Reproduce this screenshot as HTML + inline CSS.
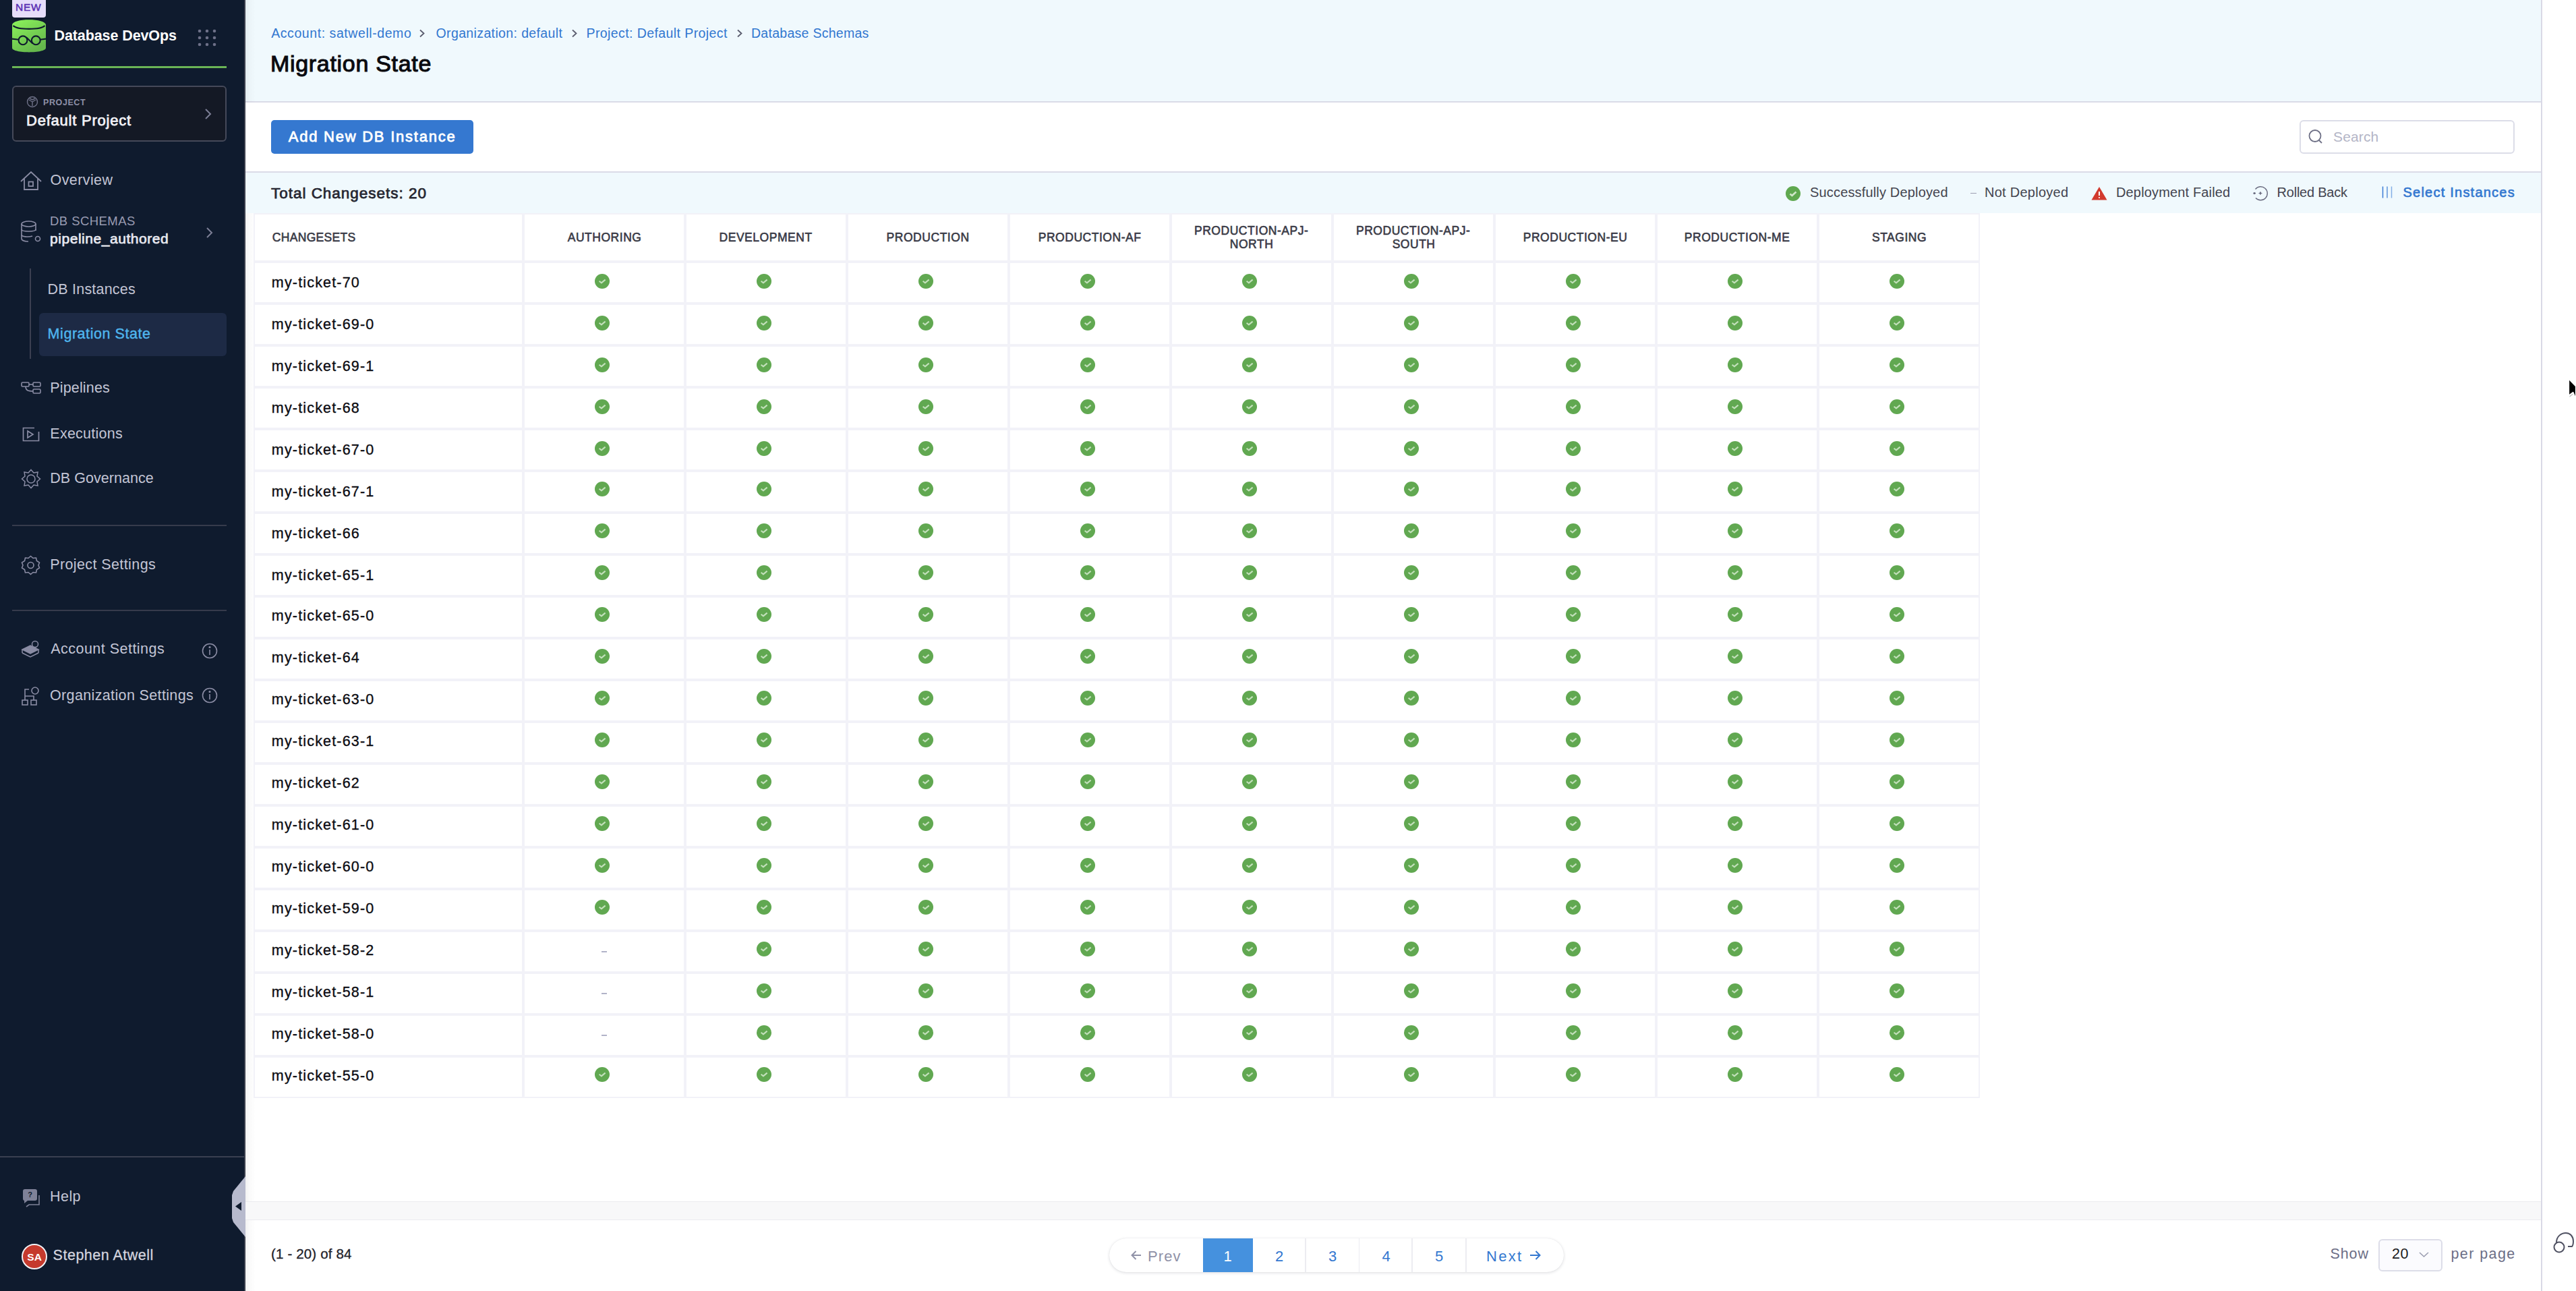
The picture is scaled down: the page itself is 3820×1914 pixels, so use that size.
<!DOCTYPE html>
<html><head><meta charset="utf-8"><title>Migration State</title>
<style>
html,body{margin:0;padding:0;width:3820px;height:1914px;overflow:hidden;background:#fff;font-family:"Liberation Sans",sans-serif;}
.a{position:absolute;}
.t{position:absolute;white-space:nowrap;line-height:1;font-family:"Liberation Sans",sans-serif;}
#side{position:absolute;left:0;top:0;width:362px;height:1914px;background:#0f1b2e;}
#sideedge{position:absolute;left:362px;top:0;width:2px;height:1914px;background:#3b3f4d;}
#hdr{position:absolute;left:364px;top:0;width:3404px;height:150px;background:#f0f9fd;border-bottom:2px solid #dadbe7;}
#tool{position:absolute;left:364px;top:152px;width:3404px;height:102px;background:#fff;border-bottom:2px solid #dadbe7;}
#legend{position:absolute;left:364px;top:256px;width:3404px;height:60px;background:#f0f9fd;}
#tbl{position:absolute;left:376px;top:316px;width:2560px;height:1312px;background:#f2f2f8;}
.c{position:absolute;background:#fff;}
#scroll{position:absolute;left:364px;top:1781px;width:3404px;height:26px;background:#f8f8f9;border-top:1.5px solid #ebebef;border-bottom:1.5px solid #ebebef;}
#rb{position:absolute;left:3768px;top:0;width:2px;height:1914px;background:#d9d9e6;}
.ck{position:absolute;width:22px;height:22px;}
.ds{position:absolute;width:8px;height:2px;background:#b1b3c8;}
</style></head><body>
<div id="side"></div>
<div id="sideedge"></div>
<!-- NEW badge -->
<div class="a" style="left:18px;top:0;width:50px;height:26px;background:#e6ddfa;border-radius:0 0 4px 4px;"></div>
<!-- logo -->
<svg class="a" style="left:18px;top:28px" width="50" height="50" viewBox="0 0 50 50">
 <defs><linearGradient id="lg" x1="0" y1="0" x2="0.6" y2="1"><stop offset="0" stop-color="#8cf35b"/><stop offset="1" stop-color="#65b74c"/></linearGradient></defs>
 <path d="M0 9 C0 -1.5 50 -1.5 50 9 L50 43 C50 51.5 0 51.5 0 43 Z" fill="url(#lg)"/>
 <path d="M1.5 10 C8 16.5 42 16.5 48.5 10" stroke="#0f1b2e" stroke-width="2.2" fill="none"/>
 <g stroke="#0f1b2e" stroke-width="2.1" fill="none"><circle cx="16" cy="31.8" r="6.4"/><circle cx="35.3" cy="31.8" r="6.4"/><path d="M0 29.6 L9.8 30.8 M21 27.2 L30.4 36.4 M41.6 30.8 L50 29.6"/></g>
</svg>
<!-- grid dots -->
<svg class="a" style="left:293px;top:43px" width="28" height="26" viewBox="0 0 28 26">
 <g fill="#6d7088"><circle cx="3" cy="3" r="2.3"/><circle cx="14" cy="3" r="2.3"/><circle cx="25" cy="3" r="2.3"/>
 <circle cx="3" cy="13" r="2.3"/><circle cx="14" cy="13" r="2.3"/><circle cx="25" cy="13" r="2.3"/>
 <circle cx="3" cy="23" r="2.3"/><circle cx="14" cy="23" r="2.3"/><circle cx="25" cy="23" r="2.3"/></g>
</svg>
<div class="a" style="left:18px;top:98px;width:318px;height:3px;background:#6ab556;"></div>
<!-- project box -->
<div class="a" style="left:18px;top:127px;width:314px;height:79px;background:#141925;border:2px solid #454959;border-radius:6px;"></div>
<svg class="a" style="left:39px;top:142px" width="18" height="18" viewBox="0 0 18 18"><g fill="none" stroke="#6f7289" stroke-width="1.4"><circle cx="9" cy="9" r="7.5"/><path d="M4 6 L9 9 L14 6 M9 9 L9 15 M5 4 L9 6 L13 4"/></g></svg>
<svg class="a" style="left:302px;top:160px" width="14" height="18" viewBox="0 0 14 18"><path d="M3 2 L10 9 L3 16" fill="none" stroke="#7c7f96" stroke-width="2"/></svg>
<!-- overview icon -->
<svg class="a" style="left:29px;top:253px" width="33" height="30" viewBox="0 0 33 30"><g fill="none" stroke="#8a8ca4" stroke-width="1.8"><path d="M2 16 L17 2 L32 16"/><path d="M7 12 L7 28 L27 28 L27 12"/><rect x="13.5" y="16.5" width="6.5" height="6.5"/></g></svg>
<!-- db schema icon -->
<svg class="a" style="left:30px;top:326px" width="34" height="34" viewBox="0 0 34 34"><g fill="none" stroke="#8a8ca4" stroke-width="1.6"><ellipse cx="12.5" cy="6" rx="10.5" ry="4"/><path d="M2 6 V28 C2 31 8 32 12 32"/><path d="M23 6 V16"/><path d="M2 14 C2 18 23 18 23 14"/><path d="M2 22 C2 25 12 26 18 24"/><circle cx="26" cy="28" r="3.5"/></g></svg>
<svg class="a" style="left:304px;top:336px" width="14" height="18" viewBox="0 0 14 18"><path d="M3 2 L10 9 L3 16" fill="none" stroke="#7c7f96" stroke-width="2"/></svg>
<div class="a" style="left:44px;top:398px;width:2px;height:134px;background:#3b4051;"></div>
<div class="a" style="left:58px;top:464px;width:278px;height:64px;background:#1d2a45;border-radius:6px;"></div>
<!-- pipelines icon -->
<svg class="a" style="left:30px;top:565px" width="32" height="20" viewBox="0 0 32 20"><g fill="none" stroke="#8a8ca4" stroke-width="1.6"><rect x="2" y="2" width="11" height="6" rx="1.5"/><rect x="19" y="2" width="11" height="6" rx="1.5"/><rect x="19" y="12" width="11" height="6" rx="1.5"/><path d="M13 5 H19"/><path d="M8 8 C8 14 12 15 19 15"/></g></svg>
<!-- executions icon -->
<svg class="a" style="left:33px;top:633px" width="27" height="22" viewBox="0 0 27 22"><g fill="none" stroke="#8a8ca4" stroke-width="1.7"><path d="M18 1.5 H1.5 V20.5 H24.5 V7"/><path d="M8 6 L16 11 L8 16 Z"/></g></svg>
<!-- governance icon -->
<svg class="a" style="left:31px;top:695px" width="30" height="30" viewBox="0 0 30 30"><g fill="none" stroke="#8a8ca4" stroke-width="1.5"><path d="M15 1.5 L19 6 L25 5 L24 11 L28.5 15 L24 19 L25 25 L19 24 L15 28.5 L11 24 L5 25 L6 19 L1.5 15 L6 11 L5 5 L11 6 Z"/><circle cx="15" cy="15" r="6"/></g></svg>
<div class="a" style="left:18px;top:778px;width:318px;height:1.5px;background:#363b4c;"></div>
<!-- project settings gear -->
<svg class="a" style="left:31px;top:823px" width="29" height="30" viewBox="0 0 29 30"><g fill="none" stroke="#8a8ca4" stroke-width="1.6"><path d="M14.5 1.5 L18 4.5 L22.5 4 L23.5 8.5 L27.5 11 L26 15 L27.5 19 L23.5 21.5 L22.5 26 L18 25.5 L14.5 28.5 L11 25.5 L6.5 26 L5.5 21.5 L1.5 19 L3 15 L1.5 11 L5.5 8.5 L6.5 4 L11 4.5 Z"/><circle cx="14.5" cy="15" r="4.5"/></g></svg>
<div class="a" style="left:18px;top:904px;width:318px;height:1.5px;background:#363b4c;"></div>
<!-- account settings icon -->
<svg class="a" style="left:31px;top:949px" width="29" height="30" viewBox="0 0 29 30"><g fill="none" stroke="#8a8ca4" stroke-width="1.5"><path d="M2 14 L14 8 L26 14 L14 20 Z" fill="#8a8ca4"/><path d="M2 19 L14 25 L26 19"/><path d="M2 14 V19 M26 14 V19"/><circle cx="21" cy="6" r="4.5" fill="#0f1b2e"/></g></svg>
<svg class="a" style="left:299px;top:953px" width="24" height="24" viewBox="0 0 24 24"><g fill="none" stroke="#8a8ca4" stroke-width="1.6"><circle cx="12" cy="12" r="10.5"/><path d="M12 10 V18"/><circle cx="12" cy="6.5" r="0.8" fill="#8a8ca4"/></g></svg>
<!-- org settings icon -->
<svg class="a" style="left:31px;top:1017px" width="29" height="30" viewBox="0 0 29 30"><g fill="none" stroke="#8a8ca4" stroke-width="1.6"><rect x="2" y="21" width="8" height="7"/><rect x="15" y="21" width="8" height="7"/><path d="M6 21 V15 H19 V21 M6 15 V5 H12"/><circle cx="21" cy="7" r="5"/></g></svg>
<svg class="a" style="left:299px;top:1019px" width="24" height="24" viewBox="0 0 24 24"><g fill="none" stroke="#8a8ca4" stroke-width="1.6"><circle cx="12" cy="12" r="10.5"/><path d="M12 10 V18"/><circle cx="12" cy="6.5" r="0.8" fill="#8a8ca4"/></g></svg>
<div class="a" style="left:0;top:1714px;width:362px;height:1.5px;background:#3a3f50;"></div>
<!-- help icon -->
<svg class="a" style="left:32px;top:1762px" width="32" height="30" viewBox="0 0 32 30"><path d="M2 4 C2 2 3 1 5 1 H20 C22 1 23 2 23 4 V15 C23 17 22 18 20 18 H9 L4 22 V18 C3 18 2 17 2 15 Z" fill="#7f8298"/><path d="M26 10 V24 H11 L7 27" fill="none" stroke="#7f8298" stroke-width="1.6"/><text x="12.5" y="13" font-size="11" font-weight="700" fill="#0f1b2e" text-anchor="middle" font-family="Liberation Sans">?</text></svg>
<!-- collapse tab -->
<svg class="a" style="left:343px;top:1744px" width="21" height="90" viewBox="0 0 21 90"><path d="M21 0 L3 22 L1 28 V62 L3 68 L21 90 Z" fill="#b7bacd"/><path d="M15 38 L6 44.5 L15 51 Z" fill="#0f1b2e"/></svg>
<!-- avatar -->
<div class="a" style="left:32px;top:1844px;width:34px;height:34px;border-radius:50%;background:#c53a2d;border:2px solid #f2f2f5;"></div>

<!-- main -->
<div id="hdr"></div>
<div class="a" style="left:364px;top:0;width:15px;height:1914px;background:linear-gradient(90deg,rgba(0,0,0,0.055),rgba(0,0,0,0.02) 40%,rgba(0,0,0,0));"></div>
<!-- breadcrumb chevrons -->
<svg class="a" style="left:619px;top:42px" width="14" height="15" viewBox="0 0 14 15"><path d="M4 2.5 L9.5 7.5 L4 12.5" fill="none" stroke="#5a5c6e" stroke-width="1.8"/></svg>
<svg class="a" style="left:845px;top:42px" width="14" height="15" viewBox="0 0 14 15"><path d="M4 2.5 L9.5 7.5 L4 12.5" fill="none" stroke="#5a5c6e" stroke-width="1.8"/></svg>
<svg class="a" style="left:1090px;top:42px" width="14" height="15" viewBox="0 0 14 15"><path d="M4 2.5 L9.5 7.5 L4 12.5" fill="none" stroke="#5a5c6e" stroke-width="1.8"/></svg>
<div id="tool"></div>
<div class="a" style="left:402px;top:178px;width:300px;height:50px;background:#3578d0;border-radius:5px;"></div>
<div class="a" style="left:3410px;top:178px;width:315px;height:46px;background:#fff;border:2px solid #dcdde8;border-radius:6px;"></div>
<svg class="a" style="left:3422px;top:190px" width="26" height="26" viewBox="0 0 26 26"><g fill="none" stroke="#6e7086" stroke-width="1.8"><circle cx="11" cy="11.5" r="8.5"/><path d="M17 18 L21 22"/></g></svg>
<div id="legend"></div>
<svg class="ck" style="left:2648px;top:276px" viewBox="0 0 22 22"><circle cx="11" cy="11" r="11" fill="#5fa84f"/><path d="M6.5 11.5 L9.5 14 L15.5 8.5" fill="none" stroke="#cfe6c8" stroke-width="2.6"/></svg>
<div class="a" style="left:2922px;top:285.5px;width:8.5px;height:1.5px;background:#9c9eb2;"></div>
<svg class="a" style="left:3101px;top:276px" width="24" height="21" viewBox="0 0 24 21"><path d="M12 1 L23.5 20.5 H0.5 Z" fill="#d23a2e"/><path d="M12 8 V14" stroke="#fff" stroke-width="2"/><circle cx="12" cy="17" r="1.1" fill="#fff"/></svg>
<svg class="a" style="left:3339px;top:274px" width="26" height="25" viewBox="0 0 26 25"><g fill="none" stroke="#6a6c80" stroke-width="1.4"><path d="M5.5 6.5 A10 10 0 1 1 6 19.5" /><path d="M3 12.5 H6"/></g><circle cx="4" cy="12.5" r="1.6" fill="#6a6c80"/><circle cx="13" cy="12.5" r="1.4" fill="#6a6c80"/><path d="M13 10 V15 M10.5 12.5 H15.5" stroke="#6a6c80" stroke-width="1"/></svg>
<svg class="a" style="left:3531px;top:275px" width="18" height="20" viewBox="0 0 18 20"><g stroke="#3a7bd5" stroke-width="1.5"><path d="M2.5 1.5 V18.5"/><path d="M9 1.5 V18.5" stroke-opacity="0.8"/><path d="M15.5 1.5 V18.5" stroke-opacity="0.6"/></g></svg>
<div id="tbl">
<svg width="0" height="0" style="position:absolute"><defs><g id="chk"><circle cx="11" cy="11" r="11" fill="#61a851"/><path d="M6.6 10.8 L9.9 13.4 L15.6 8.6" fill="none" stroke="#c3e0bb" stroke-width="2.1"/></g></defs></svg><div class="c" style="left:2px;top:2px;width:396px;height:68px"></div>
<div class="c" style="left:402px;top:2px;width:236px;height:68px"></div>
<div class="c" style="left:642px;top:2px;width:236px;height:68px"></div>
<div class="c" style="left:882px;top:2px;width:236px;height:68px"></div>
<div class="c" style="left:1122px;top:2px;width:236px;height:68px"></div>
<div class="c" style="left:1362px;top:2px;width:236px;height:68px"></div>
<div class="c" style="left:1602px;top:2px;width:236px;height:68px"></div>
<div class="c" style="left:1842px;top:2px;width:236px;height:68px"></div>
<div class="c" style="left:2082px;top:2px;width:236px;height:68px"></div>
<div class="c" style="left:2322px;top:2px;width:236px;height:68px"></div>
<div class="c" style="left:2px;top:74px;width:396px;height:58px"></div>
<div class="c" style="left:402px;top:74px;width:236px;height:58px"></div>
<div class="c" style="left:642px;top:74px;width:236px;height:58px"></div>
<div class="c" style="left:882px;top:74px;width:236px;height:58px"></div>
<div class="c" style="left:1122px;top:74px;width:236px;height:58px"></div>
<div class="c" style="left:1362px;top:74px;width:236px;height:58px"></div>
<div class="c" style="left:1602px;top:74px;width:236px;height:58px"></div>
<div class="c" style="left:1842px;top:74px;width:236px;height:58px"></div>
<div class="c" style="left:2082px;top:74px;width:236px;height:58px"></div>
<div class="c" style="left:2322px;top:74px;width:236px;height:58px"></div>
<div class="c" style="left:2px;top:136px;width:396px;height:58px"></div>
<div class="c" style="left:402px;top:136px;width:236px;height:58px"></div>
<div class="c" style="left:642px;top:136px;width:236px;height:58px"></div>
<div class="c" style="left:882px;top:136px;width:236px;height:58px"></div>
<div class="c" style="left:1122px;top:136px;width:236px;height:58px"></div>
<div class="c" style="left:1362px;top:136px;width:236px;height:58px"></div>
<div class="c" style="left:1602px;top:136px;width:236px;height:58px"></div>
<div class="c" style="left:1842px;top:136px;width:236px;height:58px"></div>
<div class="c" style="left:2082px;top:136px;width:236px;height:58px"></div>
<div class="c" style="left:2322px;top:136px;width:236px;height:58px"></div>
<div class="c" style="left:2px;top:198px;width:396px;height:58px"></div>
<div class="c" style="left:402px;top:198px;width:236px;height:58px"></div>
<div class="c" style="left:642px;top:198px;width:236px;height:58px"></div>
<div class="c" style="left:882px;top:198px;width:236px;height:58px"></div>
<div class="c" style="left:1122px;top:198px;width:236px;height:58px"></div>
<div class="c" style="left:1362px;top:198px;width:236px;height:58px"></div>
<div class="c" style="left:1602px;top:198px;width:236px;height:58px"></div>
<div class="c" style="left:1842px;top:198px;width:236px;height:58px"></div>
<div class="c" style="left:2082px;top:198px;width:236px;height:58px"></div>
<div class="c" style="left:2322px;top:198px;width:236px;height:58px"></div>
<div class="c" style="left:2px;top:260px;width:396px;height:58px"></div>
<div class="c" style="left:402px;top:260px;width:236px;height:58px"></div>
<div class="c" style="left:642px;top:260px;width:236px;height:58px"></div>
<div class="c" style="left:882px;top:260px;width:236px;height:58px"></div>
<div class="c" style="left:1122px;top:260px;width:236px;height:58px"></div>
<div class="c" style="left:1362px;top:260px;width:236px;height:58px"></div>
<div class="c" style="left:1602px;top:260px;width:236px;height:58px"></div>
<div class="c" style="left:1842px;top:260px;width:236px;height:58px"></div>
<div class="c" style="left:2082px;top:260px;width:236px;height:58px"></div>
<div class="c" style="left:2322px;top:260px;width:236px;height:58px"></div>
<div class="c" style="left:2px;top:322px;width:396px;height:58px"></div>
<div class="c" style="left:402px;top:322px;width:236px;height:58px"></div>
<div class="c" style="left:642px;top:322px;width:236px;height:58px"></div>
<div class="c" style="left:882px;top:322px;width:236px;height:58px"></div>
<div class="c" style="left:1122px;top:322px;width:236px;height:58px"></div>
<div class="c" style="left:1362px;top:322px;width:236px;height:58px"></div>
<div class="c" style="left:1602px;top:322px;width:236px;height:58px"></div>
<div class="c" style="left:1842px;top:322px;width:236px;height:58px"></div>
<div class="c" style="left:2082px;top:322px;width:236px;height:58px"></div>
<div class="c" style="left:2322px;top:322px;width:236px;height:58px"></div>
<div class="c" style="left:2px;top:384px;width:396px;height:58px"></div>
<div class="c" style="left:402px;top:384px;width:236px;height:58px"></div>
<div class="c" style="left:642px;top:384px;width:236px;height:58px"></div>
<div class="c" style="left:882px;top:384px;width:236px;height:58px"></div>
<div class="c" style="left:1122px;top:384px;width:236px;height:58px"></div>
<div class="c" style="left:1362px;top:384px;width:236px;height:58px"></div>
<div class="c" style="left:1602px;top:384px;width:236px;height:58px"></div>
<div class="c" style="left:1842px;top:384px;width:236px;height:58px"></div>
<div class="c" style="left:2082px;top:384px;width:236px;height:58px"></div>
<div class="c" style="left:2322px;top:384px;width:236px;height:58px"></div>
<div class="c" style="left:2px;top:446px;width:396px;height:58px"></div>
<div class="c" style="left:402px;top:446px;width:236px;height:58px"></div>
<div class="c" style="left:642px;top:446px;width:236px;height:58px"></div>
<div class="c" style="left:882px;top:446px;width:236px;height:58px"></div>
<div class="c" style="left:1122px;top:446px;width:236px;height:58px"></div>
<div class="c" style="left:1362px;top:446px;width:236px;height:58px"></div>
<div class="c" style="left:1602px;top:446px;width:236px;height:58px"></div>
<div class="c" style="left:1842px;top:446px;width:236px;height:58px"></div>
<div class="c" style="left:2082px;top:446px;width:236px;height:58px"></div>
<div class="c" style="left:2322px;top:446px;width:236px;height:58px"></div>
<div class="c" style="left:2px;top:508px;width:396px;height:58px"></div>
<div class="c" style="left:402px;top:508px;width:236px;height:58px"></div>
<div class="c" style="left:642px;top:508px;width:236px;height:58px"></div>
<div class="c" style="left:882px;top:508px;width:236px;height:58px"></div>
<div class="c" style="left:1122px;top:508px;width:236px;height:58px"></div>
<div class="c" style="left:1362px;top:508px;width:236px;height:58px"></div>
<div class="c" style="left:1602px;top:508px;width:236px;height:58px"></div>
<div class="c" style="left:1842px;top:508px;width:236px;height:58px"></div>
<div class="c" style="left:2082px;top:508px;width:236px;height:58px"></div>
<div class="c" style="left:2322px;top:508px;width:236px;height:58px"></div>
<div class="c" style="left:2px;top:570px;width:396px;height:58px"></div>
<div class="c" style="left:402px;top:570px;width:236px;height:58px"></div>
<div class="c" style="left:642px;top:570px;width:236px;height:58px"></div>
<div class="c" style="left:882px;top:570px;width:236px;height:58px"></div>
<div class="c" style="left:1122px;top:570px;width:236px;height:58px"></div>
<div class="c" style="left:1362px;top:570px;width:236px;height:58px"></div>
<div class="c" style="left:1602px;top:570px;width:236px;height:58px"></div>
<div class="c" style="left:1842px;top:570px;width:236px;height:58px"></div>
<div class="c" style="left:2082px;top:570px;width:236px;height:58px"></div>
<div class="c" style="left:2322px;top:570px;width:236px;height:58px"></div>
<div class="c" style="left:2px;top:632px;width:396px;height:58px"></div>
<div class="c" style="left:402px;top:632px;width:236px;height:58px"></div>
<div class="c" style="left:642px;top:632px;width:236px;height:58px"></div>
<div class="c" style="left:882px;top:632px;width:236px;height:58px"></div>
<div class="c" style="left:1122px;top:632px;width:236px;height:58px"></div>
<div class="c" style="left:1362px;top:632px;width:236px;height:58px"></div>
<div class="c" style="left:1602px;top:632px;width:236px;height:58px"></div>
<div class="c" style="left:1842px;top:632px;width:236px;height:58px"></div>
<div class="c" style="left:2082px;top:632px;width:236px;height:58px"></div>
<div class="c" style="left:2322px;top:632px;width:236px;height:58px"></div>
<div class="c" style="left:2px;top:694px;width:396px;height:58px"></div>
<div class="c" style="left:402px;top:694px;width:236px;height:58px"></div>
<div class="c" style="left:642px;top:694px;width:236px;height:58px"></div>
<div class="c" style="left:882px;top:694px;width:236px;height:58px"></div>
<div class="c" style="left:1122px;top:694px;width:236px;height:58px"></div>
<div class="c" style="left:1362px;top:694px;width:236px;height:58px"></div>
<div class="c" style="left:1602px;top:694px;width:236px;height:58px"></div>
<div class="c" style="left:1842px;top:694px;width:236px;height:58px"></div>
<div class="c" style="left:2082px;top:694px;width:236px;height:58px"></div>
<div class="c" style="left:2322px;top:694px;width:236px;height:58px"></div>
<div class="c" style="left:2px;top:756px;width:396px;height:58px"></div>
<div class="c" style="left:402px;top:756px;width:236px;height:58px"></div>
<div class="c" style="left:642px;top:756px;width:236px;height:58px"></div>
<div class="c" style="left:882px;top:756px;width:236px;height:58px"></div>
<div class="c" style="left:1122px;top:756px;width:236px;height:58px"></div>
<div class="c" style="left:1362px;top:756px;width:236px;height:58px"></div>
<div class="c" style="left:1602px;top:756px;width:236px;height:58px"></div>
<div class="c" style="left:1842px;top:756px;width:236px;height:58px"></div>
<div class="c" style="left:2082px;top:756px;width:236px;height:58px"></div>
<div class="c" style="left:2322px;top:756px;width:236px;height:58px"></div>
<div class="c" style="left:2px;top:818px;width:396px;height:58px"></div>
<div class="c" style="left:402px;top:818px;width:236px;height:58px"></div>
<div class="c" style="left:642px;top:818px;width:236px;height:58px"></div>
<div class="c" style="left:882px;top:818px;width:236px;height:58px"></div>
<div class="c" style="left:1122px;top:818px;width:236px;height:58px"></div>
<div class="c" style="left:1362px;top:818px;width:236px;height:58px"></div>
<div class="c" style="left:1602px;top:818px;width:236px;height:58px"></div>
<div class="c" style="left:1842px;top:818px;width:236px;height:58px"></div>
<div class="c" style="left:2082px;top:818px;width:236px;height:58px"></div>
<div class="c" style="left:2322px;top:818px;width:236px;height:58px"></div>
<div class="c" style="left:2px;top:880px;width:396px;height:58px"></div>
<div class="c" style="left:402px;top:880px;width:236px;height:58px"></div>
<div class="c" style="left:642px;top:880px;width:236px;height:58px"></div>
<div class="c" style="left:882px;top:880px;width:236px;height:58px"></div>
<div class="c" style="left:1122px;top:880px;width:236px;height:58px"></div>
<div class="c" style="left:1362px;top:880px;width:236px;height:58px"></div>
<div class="c" style="left:1602px;top:880px;width:236px;height:58px"></div>
<div class="c" style="left:1842px;top:880px;width:236px;height:58px"></div>
<div class="c" style="left:2082px;top:880px;width:236px;height:58px"></div>
<div class="c" style="left:2322px;top:880px;width:236px;height:58px"></div>
<div class="c" style="left:2px;top:942px;width:396px;height:58px"></div>
<div class="c" style="left:402px;top:942px;width:236px;height:58px"></div>
<div class="c" style="left:642px;top:942px;width:236px;height:58px"></div>
<div class="c" style="left:882px;top:942px;width:236px;height:58px"></div>
<div class="c" style="left:1122px;top:942px;width:236px;height:58px"></div>
<div class="c" style="left:1362px;top:942px;width:236px;height:58px"></div>
<div class="c" style="left:1602px;top:942px;width:236px;height:58px"></div>
<div class="c" style="left:1842px;top:942px;width:236px;height:58px"></div>
<div class="c" style="left:2082px;top:942px;width:236px;height:58px"></div>
<div class="c" style="left:2322px;top:942px;width:236px;height:58px"></div>
<div class="c" style="left:2px;top:1004px;width:396px;height:58px"></div>
<div class="c" style="left:402px;top:1004px;width:236px;height:58px"></div>
<div class="c" style="left:642px;top:1004px;width:236px;height:58px"></div>
<div class="c" style="left:882px;top:1004px;width:236px;height:58px"></div>
<div class="c" style="left:1122px;top:1004px;width:236px;height:58px"></div>
<div class="c" style="left:1362px;top:1004px;width:236px;height:58px"></div>
<div class="c" style="left:1602px;top:1004px;width:236px;height:58px"></div>
<div class="c" style="left:1842px;top:1004px;width:236px;height:58px"></div>
<div class="c" style="left:2082px;top:1004px;width:236px;height:58px"></div>
<div class="c" style="left:2322px;top:1004px;width:236px;height:58px"></div>
<div class="c" style="left:2px;top:1066px;width:396px;height:58px"></div>
<div class="c" style="left:402px;top:1066px;width:236px;height:58px"></div>
<div class="c" style="left:642px;top:1066px;width:236px;height:58px"></div>
<div class="c" style="left:882px;top:1066px;width:236px;height:58px"></div>
<div class="c" style="left:1122px;top:1066px;width:236px;height:58px"></div>
<div class="c" style="left:1362px;top:1066px;width:236px;height:58px"></div>
<div class="c" style="left:1602px;top:1066px;width:236px;height:58px"></div>
<div class="c" style="left:1842px;top:1066px;width:236px;height:58px"></div>
<div class="c" style="left:2082px;top:1066px;width:236px;height:58px"></div>
<div class="c" style="left:2322px;top:1066px;width:236px;height:58px"></div>
<div class="c" style="left:2px;top:1128px;width:396px;height:58px"></div>
<div class="c" style="left:402px;top:1128px;width:236px;height:58px"></div>
<div class="c" style="left:642px;top:1128px;width:236px;height:58px"></div>
<div class="c" style="left:882px;top:1128px;width:236px;height:58px"></div>
<div class="c" style="left:1122px;top:1128px;width:236px;height:58px"></div>
<div class="c" style="left:1362px;top:1128px;width:236px;height:58px"></div>
<div class="c" style="left:1602px;top:1128px;width:236px;height:58px"></div>
<div class="c" style="left:1842px;top:1128px;width:236px;height:58px"></div>
<div class="c" style="left:2082px;top:1128px;width:236px;height:58px"></div>
<div class="c" style="left:2322px;top:1128px;width:236px;height:58px"></div>
<div class="c" style="left:2px;top:1190px;width:396px;height:58px"></div>
<div class="c" style="left:402px;top:1190px;width:236px;height:58px"></div>
<div class="c" style="left:642px;top:1190px;width:236px;height:58px"></div>
<div class="c" style="left:882px;top:1190px;width:236px;height:58px"></div>
<div class="c" style="left:1122px;top:1190px;width:236px;height:58px"></div>
<div class="c" style="left:1362px;top:1190px;width:236px;height:58px"></div>
<div class="c" style="left:1602px;top:1190px;width:236px;height:58px"></div>
<div class="c" style="left:1842px;top:1190px;width:236px;height:58px"></div>
<div class="c" style="left:2082px;top:1190px;width:236px;height:58px"></div>
<div class="c" style="left:2322px;top:1190px;width:236px;height:58px"></div>
<div class="c" style="left:2px;top:1252px;width:396px;height:58px"></div>
<div class="c" style="left:402px;top:1252px;width:236px;height:58px"></div>
<div class="c" style="left:642px;top:1252px;width:236px;height:58px"></div>
<div class="c" style="left:882px;top:1252px;width:236px;height:58px"></div>
<div class="c" style="left:1122px;top:1252px;width:236px;height:58px"></div>
<div class="c" style="left:1362px;top:1252px;width:236px;height:58px"></div>
<div class="c" style="left:1602px;top:1252px;width:236px;height:58px"></div>
<div class="c" style="left:1842px;top:1252px;width:236px;height:58px"></div>
<div class="c" style="left:2082px;top:1252px;width:236px;height:58px"></div>
<div class="c" style="left:2322px;top:1252px;width:236px;height:58px"></div><svg class="ck" style="left:506px;top:89.80000000000001px" viewBox="0 0 22 22"><use href="#chk"/></svg>
<svg class="ck" style="left:746px;top:89.80000000000001px" viewBox="0 0 22 22"><use href="#chk"/></svg>
<svg class="ck" style="left:986px;top:89.80000000000001px" viewBox="0 0 22 22"><use href="#chk"/></svg>
<svg class="ck" style="left:1226px;top:89.80000000000001px" viewBox="0 0 22 22"><use href="#chk"/></svg>
<svg class="ck" style="left:1466px;top:89.80000000000001px" viewBox="0 0 22 22"><use href="#chk"/></svg>
<svg class="ck" style="left:1706px;top:89.80000000000001px" viewBox="0 0 22 22"><use href="#chk"/></svg>
<svg class="ck" style="left:1946px;top:89.80000000000001px" viewBox="0 0 22 22"><use href="#chk"/></svg>
<svg class="ck" style="left:2186px;top:89.80000000000001px" viewBox="0 0 22 22"><use href="#chk"/></svg>
<svg class="ck" style="left:2426px;top:89.80000000000001px" viewBox="0 0 22 22"><use href="#chk"/></svg>
<svg class="ck" style="left:506px;top:151.8px" viewBox="0 0 22 22"><use href="#chk"/></svg>
<svg class="ck" style="left:746px;top:151.8px" viewBox="0 0 22 22"><use href="#chk"/></svg>
<svg class="ck" style="left:986px;top:151.8px" viewBox="0 0 22 22"><use href="#chk"/></svg>
<svg class="ck" style="left:1226px;top:151.8px" viewBox="0 0 22 22"><use href="#chk"/></svg>
<svg class="ck" style="left:1466px;top:151.8px" viewBox="0 0 22 22"><use href="#chk"/></svg>
<svg class="ck" style="left:1706px;top:151.8px" viewBox="0 0 22 22"><use href="#chk"/></svg>
<svg class="ck" style="left:1946px;top:151.8px" viewBox="0 0 22 22"><use href="#chk"/></svg>
<svg class="ck" style="left:2186px;top:151.8px" viewBox="0 0 22 22"><use href="#chk"/></svg>
<svg class="ck" style="left:2426px;top:151.8px" viewBox="0 0 22 22"><use href="#chk"/></svg>
<svg class="ck" style="left:506px;top:213.79999999999995px" viewBox="0 0 22 22"><use href="#chk"/></svg>
<svg class="ck" style="left:746px;top:213.79999999999995px" viewBox="0 0 22 22"><use href="#chk"/></svg>
<svg class="ck" style="left:986px;top:213.79999999999995px" viewBox="0 0 22 22"><use href="#chk"/></svg>
<svg class="ck" style="left:1226px;top:213.79999999999995px" viewBox="0 0 22 22"><use href="#chk"/></svg>
<svg class="ck" style="left:1466px;top:213.79999999999995px" viewBox="0 0 22 22"><use href="#chk"/></svg>
<svg class="ck" style="left:1706px;top:213.79999999999995px" viewBox="0 0 22 22"><use href="#chk"/></svg>
<svg class="ck" style="left:1946px;top:213.79999999999995px" viewBox="0 0 22 22"><use href="#chk"/></svg>
<svg class="ck" style="left:2186px;top:213.79999999999995px" viewBox="0 0 22 22"><use href="#chk"/></svg>
<svg class="ck" style="left:2426px;top:213.79999999999995px" viewBox="0 0 22 22"><use href="#chk"/></svg>
<svg class="ck" style="left:506px;top:275.79999999999995px" viewBox="0 0 22 22"><use href="#chk"/></svg>
<svg class="ck" style="left:746px;top:275.79999999999995px" viewBox="0 0 22 22"><use href="#chk"/></svg>
<svg class="ck" style="left:986px;top:275.79999999999995px" viewBox="0 0 22 22"><use href="#chk"/></svg>
<svg class="ck" style="left:1226px;top:275.79999999999995px" viewBox="0 0 22 22"><use href="#chk"/></svg>
<svg class="ck" style="left:1466px;top:275.79999999999995px" viewBox="0 0 22 22"><use href="#chk"/></svg>
<svg class="ck" style="left:1706px;top:275.79999999999995px" viewBox="0 0 22 22"><use href="#chk"/></svg>
<svg class="ck" style="left:1946px;top:275.79999999999995px" viewBox="0 0 22 22"><use href="#chk"/></svg>
<svg class="ck" style="left:2186px;top:275.79999999999995px" viewBox="0 0 22 22"><use href="#chk"/></svg>
<svg class="ck" style="left:2426px;top:275.79999999999995px" viewBox="0 0 22 22"><use href="#chk"/></svg>
<svg class="ck" style="left:506px;top:337.79999999999995px" viewBox="0 0 22 22"><use href="#chk"/></svg>
<svg class="ck" style="left:746px;top:337.79999999999995px" viewBox="0 0 22 22"><use href="#chk"/></svg>
<svg class="ck" style="left:986px;top:337.79999999999995px" viewBox="0 0 22 22"><use href="#chk"/></svg>
<svg class="ck" style="left:1226px;top:337.79999999999995px" viewBox="0 0 22 22"><use href="#chk"/></svg>
<svg class="ck" style="left:1466px;top:337.79999999999995px" viewBox="0 0 22 22"><use href="#chk"/></svg>
<svg class="ck" style="left:1706px;top:337.79999999999995px" viewBox="0 0 22 22"><use href="#chk"/></svg>
<svg class="ck" style="left:1946px;top:337.79999999999995px" viewBox="0 0 22 22"><use href="#chk"/></svg>
<svg class="ck" style="left:2186px;top:337.79999999999995px" viewBox="0 0 22 22"><use href="#chk"/></svg>
<svg class="ck" style="left:2426px;top:337.79999999999995px" viewBox="0 0 22 22"><use href="#chk"/></svg>
<svg class="ck" style="left:506px;top:397.9px" viewBox="0 0 22 22"><use href="#chk"/></svg>
<svg class="ck" style="left:746px;top:397.9px" viewBox="0 0 22 22"><use href="#chk"/></svg>
<svg class="ck" style="left:986px;top:397.9px" viewBox="0 0 22 22"><use href="#chk"/></svg>
<svg class="ck" style="left:1226px;top:397.9px" viewBox="0 0 22 22"><use href="#chk"/></svg>
<svg class="ck" style="left:1466px;top:397.9px" viewBox="0 0 22 22"><use href="#chk"/></svg>
<svg class="ck" style="left:1706px;top:397.9px" viewBox="0 0 22 22"><use href="#chk"/></svg>
<svg class="ck" style="left:1946px;top:397.9px" viewBox="0 0 22 22"><use href="#chk"/></svg>
<svg class="ck" style="left:2186px;top:397.9px" viewBox="0 0 22 22"><use href="#chk"/></svg>
<svg class="ck" style="left:2426px;top:397.9px" viewBox="0 0 22 22"><use href="#chk"/></svg>
<svg class="ck" style="left:506px;top:459.9px" viewBox="0 0 22 22"><use href="#chk"/></svg>
<svg class="ck" style="left:746px;top:459.9px" viewBox="0 0 22 22"><use href="#chk"/></svg>
<svg class="ck" style="left:986px;top:459.9px" viewBox="0 0 22 22"><use href="#chk"/></svg>
<svg class="ck" style="left:1226px;top:459.9px" viewBox="0 0 22 22"><use href="#chk"/></svg>
<svg class="ck" style="left:1466px;top:459.9px" viewBox="0 0 22 22"><use href="#chk"/></svg>
<svg class="ck" style="left:1706px;top:459.9px" viewBox="0 0 22 22"><use href="#chk"/></svg>
<svg class="ck" style="left:1946px;top:459.9px" viewBox="0 0 22 22"><use href="#chk"/></svg>
<svg class="ck" style="left:2186px;top:459.9px" viewBox="0 0 22 22"><use href="#chk"/></svg>
<svg class="ck" style="left:2426px;top:459.9px" viewBox="0 0 22 22"><use href="#chk"/></svg>
<svg class="ck" style="left:506px;top:521.9px" viewBox="0 0 22 22"><use href="#chk"/></svg>
<svg class="ck" style="left:746px;top:521.9px" viewBox="0 0 22 22"><use href="#chk"/></svg>
<svg class="ck" style="left:986px;top:521.9px" viewBox="0 0 22 22"><use href="#chk"/></svg>
<svg class="ck" style="left:1226px;top:521.9px" viewBox="0 0 22 22"><use href="#chk"/></svg>
<svg class="ck" style="left:1466px;top:521.9px" viewBox="0 0 22 22"><use href="#chk"/></svg>
<svg class="ck" style="left:1706px;top:521.9px" viewBox="0 0 22 22"><use href="#chk"/></svg>
<svg class="ck" style="left:1946px;top:521.9px" viewBox="0 0 22 22"><use href="#chk"/></svg>
<svg class="ck" style="left:2186px;top:521.9px" viewBox="0 0 22 22"><use href="#chk"/></svg>
<svg class="ck" style="left:2426px;top:521.9px" viewBox="0 0 22 22"><use href="#chk"/></svg>
<svg class="ck" style="left:506px;top:583.9px" viewBox="0 0 22 22"><use href="#chk"/></svg>
<svg class="ck" style="left:746px;top:583.9px" viewBox="0 0 22 22"><use href="#chk"/></svg>
<svg class="ck" style="left:986px;top:583.9px" viewBox="0 0 22 22"><use href="#chk"/></svg>
<svg class="ck" style="left:1226px;top:583.9px" viewBox="0 0 22 22"><use href="#chk"/></svg>
<svg class="ck" style="left:1466px;top:583.9px" viewBox="0 0 22 22"><use href="#chk"/></svg>
<svg class="ck" style="left:1706px;top:583.9px" viewBox="0 0 22 22"><use href="#chk"/></svg>
<svg class="ck" style="left:1946px;top:583.9px" viewBox="0 0 22 22"><use href="#chk"/></svg>
<svg class="ck" style="left:2186px;top:583.9px" viewBox="0 0 22 22"><use href="#chk"/></svg>
<svg class="ck" style="left:2426px;top:583.9px" viewBox="0 0 22 22"><use href="#chk"/></svg>
<svg class="ck" style="left:506px;top:645.9px" viewBox="0 0 22 22"><use href="#chk"/></svg>
<svg class="ck" style="left:746px;top:645.9px" viewBox="0 0 22 22"><use href="#chk"/></svg>
<svg class="ck" style="left:986px;top:645.9px" viewBox="0 0 22 22"><use href="#chk"/></svg>
<svg class="ck" style="left:1226px;top:645.9px" viewBox="0 0 22 22"><use href="#chk"/></svg>
<svg class="ck" style="left:1466px;top:645.9px" viewBox="0 0 22 22"><use href="#chk"/></svg>
<svg class="ck" style="left:1706px;top:645.9px" viewBox="0 0 22 22"><use href="#chk"/></svg>
<svg class="ck" style="left:1946px;top:645.9px" viewBox="0 0 22 22"><use href="#chk"/></svg>
<svg class="ck" style="left:2186px;top:645.9px" viewBox="0 0 22 22"><use href="#chk"/></svg>
<svg class="ck" style="left:2426px;top:645.9px" viewBox="0 0 22 22"><use href="#chk"/></svg>
<svg class="ck" style="left:506px;top:707.9000000000001px" viewBox="0 0 22 22"><use href="#chk"/></svg>
<svg class="ck" style="left:746px;top:707.9000000000001px" viewBox="0 0 22 22"><use href="#chk"/></svg>
<svg class="ck" style="left:986px;top:707.9000000000001px" viewBox="0 0 22 22"><use href="#chk"/></svg>
<svg class="ck" style="left:1226px;top:707.9000000000001px" viewBox="0 0 22 22"><use href="#chk"/></svg>
<svg class="ck" style="left:1466px;top:707.9000000000001px" viewBox="0 0 22 22"><use href="#chk"/></svg>
<svg class="ck" style="left:1706px;top:707.9000000000001px" viewBox="0 0 22 22"><use href="#chk"/></svg>
<svg class="ck" style="left:1946px;top:707.9000000000001px" viewBox="0 0 22 22"><use href="#chk"/></svg>
<svg class="ck" style="left:2186px;top:707.9000000000001px" viewBox="0 0 22 22"><use href="#chk"/></svg>
<svg class="ck" style="left:2426px;top:707.9000000000001px" viewBox="0 0 22 22"><use href="#chk"/></svg>
<svg class="ck" style="left:506px;top:769.9000000000001px" viewBox="0 0 22 22"><use href="#chk"/></svg>
<svg class="ck" style="left:746px;top:769.9000000000001px" viewBox="0 0 22 22"><use href="#chk"/></svg>
<svg class="ck" style="left:986px;top:769.9000000000001px" viewBox="0 0 22 22"><use href="#chk"/></svg>
<svg class="ck" style="left:1226px;top:769.9000000000001px" viewBox="0 0 22 22"><use href="#chk"/></svg>
<svg class="ck" style="left:1466px;top:769.9000000000001px" viewBox="0 0 22 22"><use href="#chk"/></svg>
<svg class="ck" style="left:1706px;top:769.9000000000001px" viewBox="0 0 22 22"><use href="#chk"/></svg>
<svg class="ck" style="left:1946px;top:769.9000000000001px" viewBox="0 0 22 22"><use href="#chk"/></svg>
<svg class="ck" style="left:2186px;top:769.9000000000001px" viewBox="0 0 22 22"><use href="#chk"/></svg>
<svg class="ck" style="left:2426px;top:769.9000000000001px" viewBox="0 0 22 22"><use href="#chk"/></svg>
<svg class="ck" style="left:506px;top:831.9000000000001px" viewBox="0 0 22 22"><use href="#chk"/></svg>
<svg class="ck" style="left:746px;top:831.9000000000001px" viewBox="0 0 22 22"><use href="#chk"/></svg>
<svg class="ck" style="left:986px;top:831.9000000000001px" viewBox="0 0 22 22"><use href="#chk"/></svg>
<svg class="ck" style="left:1226px;top:831.9000000000001px" viewBox="0 0 22 22"><use href="#chk"/></svg>
<svg class="ck" style="left:1466px;top:831.9000000000001px" viewBox="0 0 22 22"><use href="#chk"/></svg>
<svg class="ck" style="left:1706px;top:831.9000000000001px" viewBox="0 0 22 22"><use href="#chk"/></svg>
<svg class="ck" style="left:1946px;top:831.9000000000001px" viewBox="0 0 22 22"><use href="#chk"/></svg>
<svg class="ck" style="left:2186px;top:831.9000000000001px" viewBox="0 0 22 22"><use href="#chk"/></svg>
<svg class="ck" style="left:2426px;top:831.9000000000001px" viewBox="0 0 22 22"><use href="#chk"/></svg>
<svg class="ck" style="left:506px;top:893.9000000000001px" viewBox="0 0 22 22"><use href="#chk"/></svg>
<svg class="ck" style="left:746px;top:893.9000000000001px" viewBox="0 0 22 22"><use href="#chk"/></svg>
<svg class="ck" style="left:986px;top:893.9000000000001px" viewBox="0 0 22 22"><use href="#chk"/></svg>
<svg class="ck" style="left:1226px;top:893.9000000000001px" viewBox="0 0 22 22"><use href="#chk"/></svg>
<svg class="ck" style="left:1466px;top:893.9000000000001px" viewBox="0 0 22 22"><use href="#chk"/></svg>
<svg class="ck" style="left:1706px;top:893.9000000000001px" viewBox="0 0 22 22"><use href="#chk"/></svg>
<svg class="ck" style="left:1946px;top:893.9000000000001px" viewBox="0 0 22 22"><use href="#chk"/></svg>
<svg class="ck" style="left:2186px;top:893.9000000000001px" viewBox="0 0 22 22"><use href="#chk"/></svg>
<svg class="ck" style="left:2426px;top:893.9000000000001px" viewBox="0 0 22 22"><use href="#chk"/></svg>
<svg class="ck" style="left:506px;top:955.9000000000001px" viewBox="0 0 22 22"><use href="#chk"/></svg>
<svg class="ck" style="left:746px;top:955.9000000000001px" viewBox="0 0 22 22"><use href="#chk"/></svg>
<svg class="ck" style="left:986px;top:955.9000000000001px" viewBox="0 0 22 22"><use href="#chk"/></svg>
<svg class="ck" style="left:1226px;top:955.9000000000001px" viewBox="0 0 22 22"><use href="#chk"/></svg>
<svg class="ck" style="left:1466px;top:955.9000000000001px" viewBox="0 0 22 22"><use href="#chk"/></svg>
<svg class="ck" style="left:1706px;top:955.9000000000001px" viewBox="0 0 22 22"><use href="#chk"/></svg>
<svg class="ck" style="left:1946px;top:955.9000000000001px" viewBox="0 0 22 22"><use href="#chk"/></svg>
<svg class="ck" style="left:2186px;top:955.9000000000001px" viewBox="0 0 22 22"><use href="#chk"/></svg>
<svg class="ck" style="left:2426px;top:955.9000000000001px" viewBox="0 0 22 22"><use href="#chk"/></svg>
<svg class="ck" style="left:506px;top:1017.9000000000001px" viewBox="0 0 22 22"><use href="#chk"/></svg>
<svg class="ck" style="left:746px;top:1017.9000000000001px" viewBox="0 0 22 22"><use href="#chk"/></svg>
<svg class="ck" style="left:986px;top:1017.9000000000001px" viewBox="0 0 22 22"><use href="#chk"/></svg>
<svg class="ck" style="left:1226px;top:1017.9000000000001px" viewBox="0 0 22 22"><use href="#chk"/></svg>
<svg class="ck" style="left:1466px;top:1017.9000000000001px" viewBox="0 0 22 22"><use href="#chk"/></svg>
<svg class="ck" style="left:1706px;top:1017.9000000000001px" viewBox="0 0 22 22"><use href="#chk"/></svg>
<svg class="ck" style="left:1946px;top:1017.9000000000001px" viewBox="0 0 22 22"><use href="#chk"/></svg>
<svg class="ck" style="left:2186px;top:1017.9000000000001px" viewBox="0 0 22 22"><use href="#chk"/></svg>
<svg class="ck" style="left:2426px;top:1017.9000000000001px" viewBox="0 0 22 22"><use href="#chk"/></svg>
<div class="ds" style="left:516px;top:1094px"></div>
<svg class="ck" style="left:746px;top:1079.9px" viewBox="0 0 22 22"><use href="#chk"/></svg>
<svg class="ck" style="left:986px;top:1079.9px" viewBox="0 0 22 22"><use href="#chk"/></svg>
<svg class="ck" style="left:1226px;top:1079.9px" viewBox="0 0 22 22"><use href="#chk"/></svg>
<svg class="ck" style="left:1466px;top:1079.9px" viewBox="0 0 22 22"><use href="#chk"/></svg>
<svg class="ck" style="left:1706px;top:1079.9px" viewBox="0 0 22 22"><use href="#chk"/></svg>
<svg class="ck" style="left:1946px;top:1079.9px" viewBox="0 0 22 22"><use href="#chk"/></svg>
<svg class="ck" style="left:2186px;top:1079.9px" viewBox="0 0 22 22"><use href="#chk"/></svg>
<svg class="ck" style="left:2426px;top:1079.9px" viewBox="0 0 22 22"><use href="#chk"/></svg>
<div class="ds" style="left:516px;top:1156px"></div>
<svg class="ck" style="left:746px;top:1141.9px" viewBox="0 0 22 22"><use href="#chk"/></svg>
<svg class="ck" style="left:986px;top:1141.9px" viewBox="0 0 22 22"><use href="#chk"/></svg>
<svg class="ck" style="left:1226px;top:1141.9px" viewBox="0 0 22 22"><use href="#chk"/></svg>
<svg class="ck" style="left:1466px;top:1141.9px" viewBox="0 0 22 22"><use href="#chk"/></svg>
<svg class="ck" style="left:1706px;top:1141.9px" viewBox="0 0 22 22"><use href="#chk"/></svg>
<svg class="ck" style="left:1946px;top:1141.9px" viewBox="0 0 22 22"><use href="#chk"/></svg>
<svg class="ck" style="left:2186px;top:1141.9px" viewBox="0 0 22 22"><use href="#chk"/></svg>
<svg class="ck" style="left:2426px;top:1141.9px" viewBox="0 0 22 22"><use href="#chk"/></svg>
<div class="ds" style="left:516px;top:1218px"></div>
<svg class="ck" style="left:746px;top:1203.9px" viewBox="0 0 22 22"><use href="#chk"/></svg>
<svg class="ck" style="left:986px;top:1203.9px" viewBox="0 0 22 22"><use href="#chk"/></svg>
<svg class="ck" style="left:1226px;top:1203.9px" viewBox="0 0 22 22"><use href="#chk"/></svg>
<svg class="ck" style="left:1466px;top:1203.9px" viewBox="0 0 22 22"><use href="#chk"/></svg>
<svg class="ck" style="left:1706px;top:1203.9px" viewBox="0 0 22 22"><use href="#chk"/></svg>
<svg class="ck" style="left:1946px;top:1203.9px" viewBox="0 0 22 22"><use href="#chk"/></svg>
<svg class="ck" style="left:2186px;top:1203.9px" viewBox="0 0 22 22"><use href="#chk"/></svg>
<svg class="ck" style="left:2426px;top:1203.9px" viewBox="0 0 22 22"><use href="#chk"/></svg>
<svg class="ck" style="left:506px;top:1265.9px" viewBox="0 0 22 22"><use href="#chk"/></svg>
<svg class="ck" style="left:746px;top:1265.9px" viewBox="0 0 22 22"><use href="#chk"/></svg>
<svg class="ck" style="left:986px;top:1265.9px" viewBox="0 0 22 22"><use href="#chk"/></svg>
<svg class="ck" style="left:1226px;top:1265.9px" viewBox="0 0 22 22"><use href="#chk"/></svg>
<svg class="ck" style="left:1466px;top:1265.9px" viewBox="0 0 22 22"><use href="#chk"/></svg>
<svg class="ck" style="left:1706px;top:1265.9px" viewBox="0 0 22 22"><use href="#chk"/></svg>
<svg class="ck" style="left:1946px;top:1265.9px" viewBox="0 0 22 22"><use href="#chk"/></svg>
<svg class="ck" style="left:2186px;top:1265.9px" viewBox="0 0 22 22"><use href="#chk"/></svg>
<svg class="ck" style="left:2426px;top:1265.9px" viewBox="0 0 22 22"><use href="#chk"/></svg>
</div>
<div id="scroll"></div>
<!-- pagination -->
<div class="a" style="left:1645px;top:1836px;width:674px;height:50px;background:#fff;border-radius:25px;box-shadow:0 1px 4px rgba(40,41,61,0.16),0 0 1px rgba(40,41,61,0.10);overflow:hidden;">
 <div class="a" style="left:139px;top:0;width:74px;height:50px;background:#4591de;"></div>
 <div class="a" style="left:290px;top:0;width:1.5px;height:50px;background:#ececf1;"></div>
 <div class="a" style="left:369.5px;top:0;width:1.5px;height:50px;background:#ececf1;"></div>
 <div class="a" style="left:448px;top:0;width:1.5px;height:50px;background:#ececf1;"></div>
 <div class="a" style="left:528px;top:0;width:1.5px;height:50px;background:#ececf1;"></div>
</div>
<svg class="a" style="left:1676px;top:1852px" width="18" height="18" viewBox="0 0 18 18"><g fill="none" stroke="#8f91a7" stroke-width="2"><path d="M16 9 H3 M8.5 3 L2.5 9 L8.5 15"/></g></svg>
<svg class="a" style="left:2267px;top:1852px" width="20" height="18" viewBox="0 0 20 18"><g fill="none" stroke="#3277d0" stroke-width="2"><path d="M2 9 H16 M10.5 3 L16.5 9 L10.5 15"/></g></svg>
<div class="a" style="left:3527px;top:1837px;width:91px;height:44px;background:#fbfbfe;border:2px solid #dcdde8;border-radius:6px;"></div>
<svg class="a" style="left:3586px;top:1854px" width="17" height="12" viewBox="0 0 17 12"><path d="M2 3 L8.5 9 L15 3" fill="none" stroke="#9a9cb0" stroke-width="1.6"/></svg>
<div id="rb"></div>
<svg class="a" style="left:3785px;top:1826px" width="34" height="35" viewBox="0 0 34 35"><g fill="none" stroke="#4f5162" stroke-width="2"><circle cx="10" cy="23" r="7.5"/><path d="M6 16 C6 7 13 2 20 2 C27 2 31 8 31 14 C31 18 30 21 29 22 H23"/></g></svg>
<!-- cursor -->
<svg class="a" style="left:3805px;top:557px" width="15" height="44" viewBox="0 0 15 44"><path d="M5 5 L5 31 L11 26 L15 36 L15 17 Z" fill="rgba(0,0,0,0.25)" transform="translate(0.5,1)"/><path d="M4 4 L4 30 L10.5 25 L15 35.5 L15 15.5 Z" fill="#000" stroke="#fff" stroke-width="2.2" stroke-linejoin="round"/></svg>
<div class="t" style="left:23.00px;top:3.00px;font-size:15.5px;font-weight:400;color:#5b2fb3;letter-spacing:0.734px;-webkit-text-stroke:0.5px #5b2fb3;">NEW</div>
<div class="t" style="left:80.50px;top:43.20px;font-size:21.5px;font-weight:700;color:#ffffff;letter-spacing:-0.098px;">Database DevOps</div>
<div class="t" style="left:64.00px;top:145.70px;font-size:12.5px;font-weight:700;color:#8e90a8;letter-spacing:0.599px;">PROJECT</div>
<div class="t" style="left:39.00px;top:168.20px;font-size:22px;font-weight:400;color:#f2f2f7;letter-spacing:0.773px;-webkit-text-stroke:0.75px #f2f2f7;">Default Project</div>
<div class="t" style="left:74.50px;top:256.70px;font-size:21.5px;font-weight:400;color:#c3c5d5;letter-spacing:0.418px;">Overview</div>
<div class="t" style="left:74.00px;top:318.80px;font-size:18.5px;font-weight:400;color:#9a9cb2;letter-spacing:0.446px;">DB SCHEMAS</div>
<div class="t" style="left:74.00px;top:343.40px;font-size:21px;font-weight:400;color:#e8e9f0;letter-spacing:0.544px;-webkit-text-stroke:0.7px #e8e9f0;">pipeline_authored</div>
<div class="t" style="left:70.60px;top:419.00px;font-size:21.5px;font-weight:400;color:#c3c5d5;letter-spacing:0.208px;">DB Instances</div>
<div class="t" style="left:70.60px;top:484.70px;font-size:21.5px;font-weight:400;color:#4fb6ee;letter-spacing:0.554px;-webkit-text-stroke:0.4px #4fb6ee;">Migration State</div>
<div class="t" style="left:74.30px;top:565.40px;font-size:21.5px;font-weight:400;color:#c3c5d5;letter-spacing:0.150px;">Pipelines</div>
<div class="t" style="left:74.30px;top:633.00px;font-size:21.5px;font-weight:400;color:#c3c5d5;letter-spacing:0.253px;">Executions</div>
<div class="t" style="left:74.30px;top:698.70px;font-size:21.5px;font-weight:400;color:#c3c5d5;letter-spacing:0.041px;">DB Governance</div>
<div class="t" style="left:74.20px;top:826.70px;font-size:21.5px;font-weight:400;color:#c3c5d5;letter-spacing:0.398px;">Project Settings</div>
<div class="t" style="left:75.20px;top:952.40px;font-size:21.5px;font-weight:400;color:#c3c5d5;letter-spacing:0.480px;">Account Settings</div>
<div class="t" style="left:74.00px;top:1020.70px;font-size:21.5px;font-weight:400;color:#c3c5d5;letter-spacing:0.359px;">Organization Settings</div>
<div class="t" style="left:74.00px;top:1763.60px;font-size:21.5px;font-weight:400;color:#c3c5d5;letter-spacing:0.447px;">Help</div>
<div class="t" style="left:78.60px;top:1850.80px;font-size:21.5px;font-weight:400;color:#d3d4de;letter-spacing:0.504px;-webkit-text-stroke:0.3px #d3d4de;">Stephen Atwell</div>
<div class="t" style="left:40.33px;top:1856.00px;font-size:15.5px;font-weight:700;color:#ffffff;">SA</div>
<div class="t" style="left:402.20px;top:39.90px;font-size:19.5px;font-weight:400;color:#3277d0;letter-spacing:0.569px;">Account: satwell-demo</div>
<div class="t" style="left:646.50px;top:39.90px;font-size:19.5px;font-weight:400;color:#3277d0;letter-spacing:0.374px;">Organization: default</div>
<div class="t" style="left:869.50px;top:39.90px;font-size:19.5px;font-weight:400;color:#3277d0;letter-spacing:0.413px;">Project: Default Project</div>
<div class="t" style="left:1114.00px;top:39.90px;font-size:19.5px;font-weight:400;color:#3277d0;letter-spacing:0.278px;">Database Schemas</div>
<div class="t" style="left:401.00px;top:77.00px;font-size:34px;font-weight:400;color:#0b0b10;letter-spacing:0.689px;-webkit-text-stroke:1.1px #0b0b10;">Migration State</div>
<div class="t" style="left:427.80px;top:191.70px;font-size:22px;font-weight:400;color:#ffffff;letter-spacing:1.756px;-webkit-text-stroke:0.8px #ffffff;">Add New DB Instance</div>
<div class="t" style="left:3460.00px;top:191.70px;font-size:21px;font-weight:400;color:#b3b5c6;letter-spacing:0.148px;">Search</div>
<div class="t" style="left:402.00px;top:276.00px;font-size:22.5px;font-weight:400;color:#262731;letter-spacing:0.975px;-webkit-text-stroke:0.75px #262731;">Total Changesets: 20</div>
<div class="t" style="left:2684.00px;top:274.80px;font-size:20px;font-weight:400;color:#43444f;letter-spacing:0.166px;">Successfully Deployed</div>
<div class="t" style="left:2943.00px;top:274.80px;font-size:20px;font-weight:400;color:#43444f;letter-spacing:0.267px;">Not Deployed</div>
<div class="t" style="left:3138.00px;top:274.80px;font-size:20px;font-weight:400;color:#43444f;letter-spacing:0.148px;">Deployment Failed</div>
<div class="t" style="left:3376.60px;top:275.00px;font-size:20px;font-weight:400;color:#43444f;letter-spacing:-0.232px;">Rolled Back</div>
<div class="t" style="left:3563.50px;top:275.00px;font-size:20px;font-weight:400;color:#3277d0;letter-spacing:1.230px;-webkit-text-stroke:0.65px #3277d0;">Select Instances</div>
<div class="t" style="left:403.80px;top:343.60px;font-size:17.5px;font-weight:400;color:#3a3b47;letter-spacing:0.322px;-webkit-text-stroke:0.6px #3a3b47;">CHANGESETS</div>
<div class="t" style="left:841.68px;top:343.60px;font-size:17.5px;font-weight:400;color:#3a3b47;letter-spacing:0.531px;-webkit-text-stroke:0.6px #3a3b47;">AUTHORING</div>
<div class="t" style="left:1066.56px;top:343.60px;font-size:17.5px;font-weight:400;color:#3a3b47;letter-spacing:0.531px;-webkit-text-stroke:0.6px #3a3b47;">DEVELOPMENT</div>
<div class="t" style="left:1314.61px;top:343.60px;font-size:17.5px;font-weight:400;color:#3a3b47;letter-spacing:0.531px;-webkit-text-stroke:0.6px #3a3b47;">PRODUCTION</div>
<div class="t" style="left:1539.74px;top:343.60px;font-size:17.5px;font-weight:400;color:#3a3b47;letter-spacing:0.531px;-webkit-text-stroke:0.6px #3a3b47;">PRODUCTION-AF</div>
<div class="t" style="left:1771.00px;top:333.70px;font-size:17.5px;font-weight:400;color:#3a3b47;letter-spacing:0.531px;-webkit-text-stroke:0.6px #3a3b47;">PRODUCTION-APJ-</div>
<div class="t" style="left:1823.81px;top:353.60px;font-size:17.5px;font-weight:400;color:#3a3b47;letter-spacing:0.531px;-webkit-text-stroke:0.6px #3a3b47;">NORTH</div>
<div class="t" style="left:2011.00px;top:333.70px;font-size:17.5px;font-weight:400;color:#3a3b47;letter-spacing:0.531px;-webkit-text-stroke:0.6px #3a3b47;">PRODUCTION-APJ-</div>
<div class="t" style="left:2064.63px;top:353.60px;font-size:17.5px;font-weight:400;color:#3a3b47;letter-spacing:0.531px;-webkit-text-stroke:0.6px #3a3b47;">SOUTH</div>
<div class="t" style="left:2258.74px;top:343.60px;font-size:17.5px;font-weight:400;color:#3a3b47;letter-spacing:0.531px;-webkit-text-stroke:0.6px #3a3b47;">PRODUCTION-EU</div>
<div class="t" style="left:2497.79px;top:343.60px;font-size:17.5px;font-weight:400;color:#3a3b47;letter-spacing:0.531px;-webkit-text-stroke:0.6px #3a3b47;">PRODUCTION-ME</div>
<div class="t" style="left:2775.98px;top:343.60px;font-size:17.5px;font-weight:400;color:#3a3b47;letter-spacing:0.531px;-webkit-text-stroke:0.6px #3a3b47;">STAGING</div>
<div class="t" style="left:402.80px;top:408.80px;font-size:21.5px;font-weight:400;color:#0c0c12;letter-spacing:1.171px;-webkit-text-stroke:0.35px #0c0c12;">my-ticket-70</div>
<div class="t" style="left:402.80px;top:470.80px;font-size:21.5px;font-weight:400;color:#0c0c12;letter-spacing:1.171px;-webkit-text-stroke:0.35px #0c0c12;">my-ticket-69-0</div>
<div class="t" style="left:402.80px;top:532.80px;font-size:21.5px;font-weight:400;color:#0c0c12;letter-spacing:1.171px;-webkit-text-stroke:0.35px #0c0c12;">my-ticket-69-1</div>
<div class="t" style="left:402.80px;top:594.80px;font-size:21.5px;font-weight:400;color:#0c0c12;letter-spacing:1.171px;-webkit-text-stroke:0.35px #0c0c12;">my-ticket-68</div>
<div class="t" style="left:402.80px;top:656.80px;font-size:21.5px;font-weight:400;color:#0c0c12;letter-spacing:1.171px;-webkit-text-stroke:0.35px #0c0c12;">my-ticket-67-0</div>
<div class="t" style="left:402.80px;top:718.80px;font-size:21.5px;font-weight:400;color:#0c0c12;letter-spacing:1.171px;-webkit-text-stroke:0.35px #0c0c12;">my-ticket-67-1</div>
<div class="t" style="left:402.80px;top:780.80px;font-size:21.5px;font-weight:400;color:#0c0c12;letter-spacing:1.171px;-webkit-text-stroke:0.35px #0c0c12;">my-ticket-66</div>
<div class="t" style="left:402.80px;top:842.80px;font-size:21.5px;font-weight:400;color:#0c0c12;letter-spacing:1.171px;-webkit-text-stroke:0.35px #0c0c12;">my-ticket-65-1</div>
<div class="t" style="left:402.80px;top:902.80px;font-size:21.5px;font-weight:400;color:#0c0c12;letter-spacing:1.171px;-webkit-text-stroke:0.35px #0c0c12;">my-ticket-65-0</div>
<div class="t" style="left:402.80px;top:964.80px;font-size:21.5px;font-weight:400;color:#0c0c12;letter-spacing:1.171px;-webkit-text-stroke:0.35px #0c0c12;">my-ticket-64</div>
<div class="t" style="left:402.80px;top:1026.80px;font-size:21.5px;font-weight:400;color:#0c0c12;letter-spacing:1.171px;-webkit-text-stroke:0.35px #0c0c12;">my-ticket-63-0</div>
<div class="t" style="left:402.80px;top:1088.80px;font-size:21.5px;font-weight:400;color:#0c0c12;letter-spacing:1.171px;-webkit-text-stroke:0.35px #0c0c12;">my-ticket-63-1</div>
<div class="t" style="left:402.80px;top:1150.80px;font-size:21.5px;font-weight:400;color:#0c0c12;letter-spacing:1.171px;-webkit-text-stroke:0.35px #0c0c12;">my-ticket-62</div>
<div class="t" style="left:402.80px;top:1212.80px;font-size:21.5px;font-weight:400;color:#0c0c12;letter-spacing:1.171px;-webkit-text-stroke:0.35px #0c0c12;">my-ticket-61-0</div>
<div class="t" style="left:402.80px;top:1274.80px;font-size:21.5px;font-weight:400;color:#0c0c12;letter-spacing:1.171px;-webkit-text-stroke:0.35px #0c0c12;">my-ticket-60-0</div>
<div class="t" style="left:402.80px;top:1336.80px;font-size:21.5px;font-weight:400;color:#0c0c12;letter-spacing:1.171px;-webkit-text-stroke:0.35px #0c0c12;">my-ticket-59-0</div>
<div class="t" style="left:402.80px;top:1398.80px;font-size:21.5px;font-weight:400;color:#0c0c12;letter-spacing:1.171px;-webkit-text-stroke:0.35px #0c0c12;">my-ticket-58-2</div>
<div class="t" style="left:402.80px;top:1460.80px;font-size:21.5px;font-weight:400;color:#0c0c12;letter-spacing:1.171px;-webkit-text-stroke:0.35px #0c0c12;">my-ticket-58-1</div>
<div class="t" style="left:402.80px;top:1522.80px;font-size:21.5px;font-weight:400;color:#0c0c12;letter-spacing:1.171px;-webkit-text-stroke:0.35px #0c0c12;">my-ticket-58-0</div>
<div class="t" style="left:402.80px;top:1584.80px;font-size:21.5px;font-weight:400;color:#0c0c12;letter-spacing:1.171px;-webkit-text-stroke:0.35px #0c0c12;">my-ticket-55-0</div>
<div class="t" style="left:402.00px;top:1848.90px;font-size:20.5px;font-weight:400;color:#22222a;letter-spacing:0.157px;-webkit-text-stroke:0.3px #22222a;">(1 - 20) of 84</div>
<div class="t" style="left:1702.00px;top:1851.80px;font-size:22px;font-weight:400;color:#8f91a7;letter-spacing:1.122px;">Prev</div>
<div class="t" style="left:1814.50px;top:1851.80px;font-size:22px;font-weight:400;color:#ffffff;">1</div>
<div class="t" style="left:1890.90px;top:1851.80px;font-size:22px;font-weight:400;color:#3277d0;">2</div>
<div class="t" style="left:1970.00px;top:1851.80px;font-size:22px;font-weight:400;color:#3277d0;">3</div>
<div class="t" style="left:2049.50px;top:1851.80px;font-size:22px;font-weight:400;color:#3277d0;">4</div>
<div class="t" style="left:2128.00px;top:1851.80px;font-size:22px;font-weight:400;color:#3277d0;">5</div>
<div class="t" style="left:2204.00px;top:1851.80px;font-size:22px;font-weight:400;color:#3277d0;letter-spacing:2.292px;">Next</div>
<div class="t" style="left:3455.40px;top:1848.60px;font-size:21.5px;font-weight:400;color:#6c6e86;letter-spacing:0.915px;">Show</div>
<div class="t" style="left:3547.00px;top:1848.60px;font-size:21.5px;font-weight:400;color:#1b1b22;letter-spacing:0.543px;">20</div>
<div class="t" style="left:3634.50px;top:1848.60px;font-size:21.5px;font-weight:400;color:#6c6e86;letter-spacing:1.412px;">per page</div>
</body></html>
